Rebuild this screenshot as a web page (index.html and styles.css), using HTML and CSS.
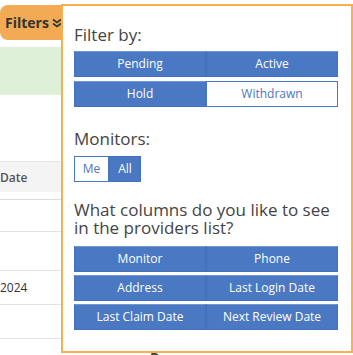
FILE: index.html
```html
<!DOCTYPE html>
<html lang="en">
<head>
  <meta charset="UTF-8">
  <title>Providers</title>
  <link rel="stylesheet" href="styles.css">
</head>
<body>

<div class="page">
  <div class="toolbar">
    <button class="filtersBtn">
      Filters
      <svg width="10" height="10" viewBox="0 0 10 10">
        <path d="M1 1.5 L5 4.5 L9 1.5 M1 5.5 L5 8.5 L9 5.5" fill="none" stroke="#333" stroke-width="1.6"/>
      </svg>
    </button>
  </div>

  <div class="notice"></div>

  <table class="providers">
    <tr class="head"><th>Date</th></tr>
    <tr><td>&nbsp;</td></tr>
    <tr><td>&nbsp;</td></tr>
    <tr><td>2024</td></tr>
    <tr><td>&nbsp;</td></tr>
  </table>

  <div class="behind">Renew</div>

  <div class="popup">
    <h3 class="label">Filter by:</h3>
    <div class="grid">
      <div class="opt on">Pending</div>
      <div class="opt on">Active</div>
    </div>
    <div class="grid">
      <div class="opt on">Hold</div>
      <div class="opt">Withdrawn</div>
    </div>

    <h3 class="label monitors">Monitors:</h3>
    <div class="toggle">
      <div class="opt">Me</div>
      <div class="opt on">All</div>
    </div>

    <h3 class="label columns">What columns do you like to see in the providers list?</h3>
    <div class="grid cols">
      <div class="opt on">Monitor</div>
      <div class="opt on">Phone</div>
    </div>
    <div class="grid cols">
      <div class="opt on">Address</div>
      <div class="opt on">Last Login Date</div>
    </div>
    <div class="grid cols">
      <div class="opt on">Last Claim Date</div>
      <div class="opt on">Next Review Date</div>
    </div>
  </div>
</div>

</body>
</html>
```

FILE: styles.css
```css
* {
  box-sizing: border-box;
  margin: 0;
  padding: 0;
}

body {
  font-family: 'Open Sans', 'Liberation Sans', sans-serif;
  background-color: #fff;
  color: #333;
  overflow: hidden;
}

.page {
  position: relative;
  width: 353px;
  height: 355px;
}

.toolbar {
  padding-top: 5px;
  height: 47px;
}

.filtersBtn {
  display: flex;
  align-items: center;
  gap: 3px;
  width: 70px;
  height: 35px;
  padding-left: 5px;
  border: none;
  border-radius: 8px;
  background-color: #f2aa55;
  font-family: inherit;
  font-size: 14px;
  font-weight: 700;
  color: #333;
}

.notice {
  height: 48px;
  background-color: #dff0d8;
}

.providers {
  margin-top: 66px;
  width: 353px;
  border-collapse: collapse;
  font-size: 12px;
  text-align: left;
}

.providers th {
  height: 34px;
  background-color: #f4f4f4;
  color: #555;
  font-weight: 600;
  border-top: 1px solid #e6e6e6;
  border-bottom: 1px solid #ddd;
}

.providers tr:nth-child(2) td {
  border-top: 7px solid #fff;
  box-shadow: inset 0 1px 0 #ddd;
}

.providers td {
  height: 34px;
  border-bottom: 1px solid #e2e2e2;
  color: #333;
}

.providers tr:nth-child(2) td { height: 36px; }
.providers tr:nth-child(3) td { height: 39px; }

.behind {
  position: absolute;
  left: 150px;
  top: 348px;
  font-size: 14px;
  font-weight: 700;
  color: #444;
}

.popup {
  position: absolute;
  left: 61px;
  top: 4px;
  width: 292px;
  height: 349px;
  background-color: #fff;
  border: 2px solid #f7b04d;
  padding: 19px 13px 0 11px;
}

.label {
  font-size: 17px;
  font-weight: 400;
  line-height: 20px;
  color: #444;
  margin-bottom: 6px;
}

.label.monitors {
  margin-top: 22px;
  margin-bottom: 7px;
}

.label.columns {
  margin-top: 19px;
  margin-bottom: 10px;
  line-height: 17.5px;
}

.grid {
  display: grid;
  grid-template-columns: 132px 132px;
  margin-bottom: 4px;
}

.grid.cols {
  margin-bottom: 3px;
}

.opt {
  height: 26px;
  line-height: 24px;
  text-align: center;
  font-size: 12px;
  color: #4a78c2;
  background-color: #fff;
  border: 1px solid #4a78c2;
}

.opt.on {
  color: #fff;
  background-color: #4a78c2;
  border-color: #4373bd;
  border-top-color: #7098d2;
}

.grid .opt:nth-child(2).on {
  border-left-color: #4170ba;
}

.toggle {
  display: flex;
}

.toggle .opt {
  width: 35px;
  padding: 0;
}

.toggle .opt.on {
  width: 32px;
  border-top-color: #4373bd;
}
```
